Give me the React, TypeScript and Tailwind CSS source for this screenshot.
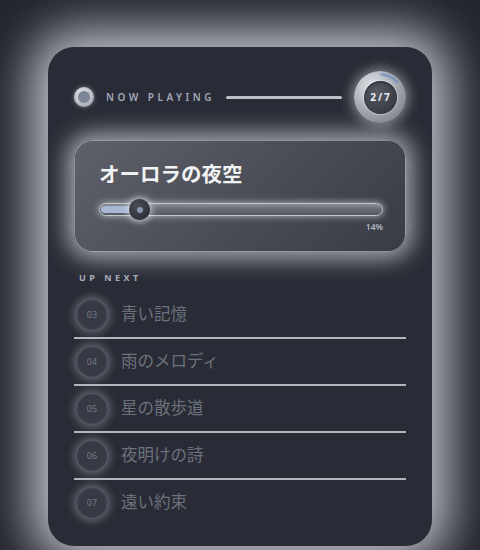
import React from "react";

const tracks = [
  { n: "03", title: "青い記憶" },
  { n: "04", title: "雨のメロディ" },
  { n: "05", title: "星の散歩道" },
  { n: "06", title: "夜明けの詩" },
  { n: "07", title: "遠い約束" },
];

const font = { fontFamily: '"Noto Sans", "Noto Sans CJK JP", sans-serif' };

function TrackBadge() {
  // ring with progress arc, track counter in the middle
  return (
    <div className="relative h-[52px] w-[52px] shrink-0 rounded-full bg-[radial-gradient(circle_at_35%_30%,#e4e6ea_0%,#a9adb6_45%,#6c707a_100%)] shadow-[0_0_12px_3px_rgba(210,214,222,0.5)] flex items-center justify-center">
      <svg className="absolute inset-0" width="52" height="52" viewBox="0 0 52 52">
        <path d="M28 3.5 A22.5 22.5 0 0 1 43 11" fill="none" stroke="#7f93bd" strokeWidth="3" strokeLinecap="round" opacity="0.85" />
      </svg>
      <div className="h-[33px] w-[33px] rounded-full bg-[radial-gradient(circle_at_40%_35%,#565a63_0%,#3a3d46_70%,#30333b_100%)] shadow-[inset_0_1px_2px_rgba(0,0,0,0.5),0_0_0_1px_rgba(255,255,255,0.35)] flex items-center justify-center">
        <span className="text-[10px] font-bold tracking-[2px] text-[#eceef2] pl-[2px]">2/7</span>
      </div>
    </div>
  );
}

export default function App() {
  return (
    <div className="h-[550px] w-[480px] overflow-hidden bg-[#22252d] pt-[47px]" style={font}>
      <div className="mx-[48px] h-[499px] rounded-[26px] bg-[#292c36] px-[26px] pt-[24px] shadow-[0_0_50px_16px_rgba(212,215,222,0.92)]">
        {/* header */}
        <div className="flex h-[52px] items-center">
          <div className="flex h-[20px] w-[20px] shrink-0 items-center justify-center rounded-full bg-[radial-gradient(circle_at_40%_35%,#e6e8ec_0%,#b4b8c1_60%,#8d919b_100%)] shadow-[0_0_4px_rgba(210,214,222,0.5)]">
            <div className="h-[12px] w-[12px] rounded-full bg-[#7c8698]" />
          </div>
          <span className="ml-[12px] text-[10px] font-semibold tracking-[3.5px] text-[#a2a8b6]">NOW PLAYING</span>
          <div className="ml-[11px] mr-[12px] h-[3px] flex-1 rounded-full bg-[#bcc0c8]" />
          <TrackBadge />
        </div>

        {/* current track panel */}
        <div className="mt-[17px] h-[112px] rounded-[18px] border border-[rgba(235,237,242,0.45)] bg-[linear-gradient(135deg,#5e6169_0%,#4b4e56_50%,#393c44_100%)] pl-[24px] pr-[22px] pt-[19px] shadow-[0_0_22px_7px_rgba(215,218,225,0.7)]">
          <div className="text-[20.5px] font-bold leading-[28px] text-[#f1f2f4]">オーロラの夜空</div>
          <div className="relative mt-[15px] h-[13px] w-[284px] rounded-full border border-[#c3c6cd] bg-[linear-gradient(180deg,#8a8d95_0%,#6a6d75_45%,#575a62_100%)] shadow-[0_0_6px_1px_rgba(220,222,228,0.6)]">
            <div className="absolute left-[1px] top-[2px] h-[7px] w-[38px] rounded-full bg-[#a8b7d3]" />
            <div className="absolute left-[29px] top-[-5px] flex h-[21px] w-[21px] items-center justify-center rounded-full bg-[radial-gradient(circle_at_40%_35%,#4a4d55_0%,#2b2e36_80%)] shadow-[0_0_6px_2px_rgba(225,228,235,0.7)]">
              <div className="h-[6px] w-[6px] rounded-full bg-[#8a98b2]" />
            </div>
          </div>
          <div className="mt-[5px] w-[284px] text-right text-[8.5px] font-semibold leading-[12px] text-[#b3b7c0]">14%</div>
        </div>

        {/* queue */}
        <div className="ml-[5px] mt-[20px] text-[9px] font-bold leading-[12px] tracking-[3.5px] text-[#a7acb8]">UP NEXT</div>
        <div className="mt-[8px]">
          {tracks.map((t, i) => (
            <div key={t.n}>
              <div className="flex h-[45px] items-center">
                <div className="ml-[3px] flex h-[30px] w-[30px] shrink-0 items-center justify-center rounded-full bg-[#373a44] shadow-[0_0_8px_3px_rgba(195,200,212,0.4),inset_0_0_3px_rgba(255,255,255,0.08)]">
                  <span className="text-[9px] text-[#767b87]">{t.n}</span>
                </div>
                <span className="ml-[14px] text-[16.5px] text-[#6c717c]">{t.title}</span>
              </div>
              {i < tracks.length - 1 && <div className="h-[2px] bg-[#b2b6be]" />}
            </div>
          ))}
        </div>
      </div>
    </div>
  );
}
